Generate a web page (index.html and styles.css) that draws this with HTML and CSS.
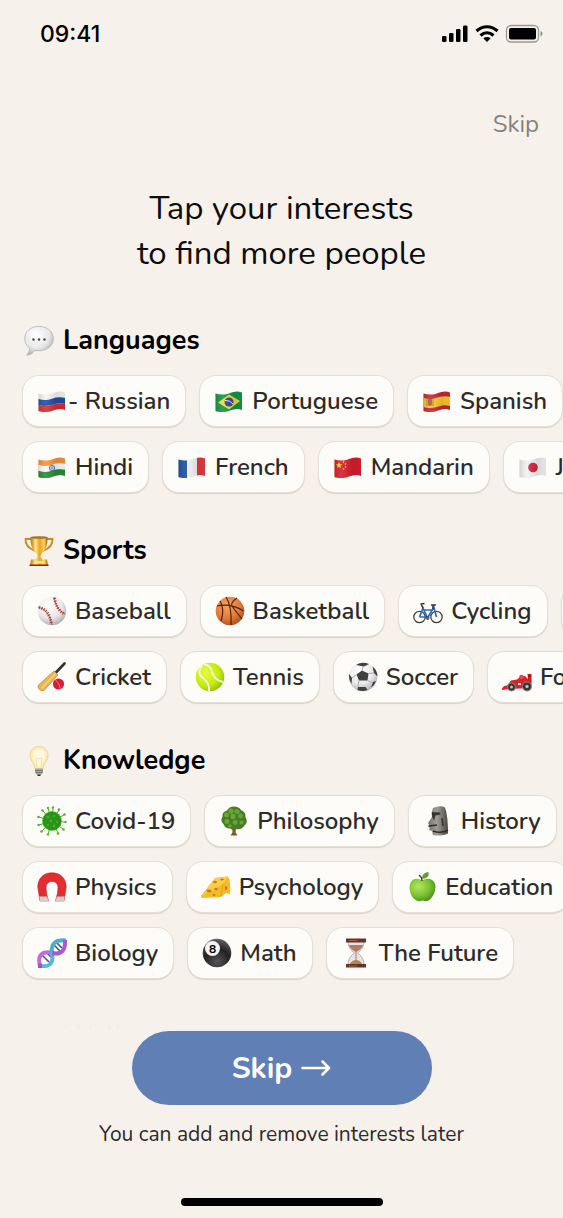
FILE: index.html
```
<!DOCTYPE html>
<html lang="en">
<head>
  <meta charset="UTF-8" />
  <meta name="viewport" content="width=device-width, initial-scale=1.0" />
  <title>Interests</title>
  <link rel="stylesheet" href="styles.css">
</head>
<body>
  <!-- shared flag shape, wave and gradients -->
  <svg class="defs" aria-hidden="true">
    <defs>
      <clipPath id="flag"><path d="M1.500 7.500C7 9.500 12 8.500 16 7S24 5 28 6.500V24C24 22.500 20 23 16 24.500S6 27 1.500 25Z"/></clipPath>
      <path id="wave" d="M0 7C7 9.500 12 8.500 16 7S24 5 30 7" fill="none"/>
      <linearGradient id="shade"><stop offset="0" stop-opacity=".18"/><stop offset=".3" stop-color="#fff" stop-opacity=".1"/><stop offset=".65" stop-opacity=".1"/><stop offset="1" stop-opacity=".05"/></linearGradient>
      <radialGradient id="white" cx=".4" cy=".3" r=".75"><stop offset="0" stop-color="#fff"/><stop offset=".6" stop-color="#e8e8e8"/><stop offset="1" stop-color="#a8a8a8"/></radialGradient>
      <radialGradient id="orange" cx=".4" cy=".3" r=".75"><stop offset="0" stop-color="#f7a35e"/><stop offset=".6" stop-color="#e27b39"/><stop offset="1" stop-color="#a94b1d"/></radialGradient>
      <radialGradient id="lime" cx=".35" cy=".35" r=".75"><stop offset="0" stop-color="#e6fb3c"/><stop offset=".6" stop-color="#c9ea12"/><stop offset="1" stop-color="#8eb80a"/></radialGradient>
      <radialGradient id="green" cx=".35" cy=".35" r=".8"><stop offset="0" stop-color="#b8e85a"/><stop offset=".55" stop-color="#77bf32"/><stop offset="1" stop-color="#3f7f16"/></radialGradient>
      <radialGradient id="black" cx=".5" cy=".8" r=".9"><stop offset="0" stop-color="#555"/><stop offset=".5" stop-color="#222"/><stop offset="1" stop-color="#777"/></radialGradient>
      <linearGradient id="gold"><stop offset="0" stop-color="#b8750f"/><stop offset=".3" stop-color="#ffe389"/><stop offset=".55" stop-color="#e7a325"/><stop offset=".8" stop-color="#ffd45c"/><stop offset="1" stop-color="#9c5c0a"/></linearGradient>
      <linearGradient id="stone"><stop offset="0" stop-color="#77736f"/><stop offset=".45" stop-color="#a09c98"/><stop offset="1" stop-color="#4a4643"/></linearGradient>
    </defs>
  </svg>

  <div class="status-bar">
    <span class="time">09:41</span>
    <svg class="status-icons" viewBox="0 0 102 20" aria-label="Signal, Wi-Fi, battery">
      <rect x="1" y="12" width="4.500" height="6" rx="1.300"/>
      <rect x="8" y="9" width="4.500" height="9" rx="1.300"/>
      <rect x="15" y="5" width="4.500" height="13" rx="1.300"/>
      <rect x="22" y="1.500" width="4.500" height="16.500" rx="1.300"/>
      <g fill="none" stroke="#000" stroke-width="3.200">
        <path d="M35.500 7C41.500 1.300 50.500 1.300 56.500 7"/>
        <path d="M39.500 11.500C43.500 8 48.500 8 52.500 11.500"/>
      </g>
      <path d="M42.300 14.300Q46 11.500 49.700 14.300L46 18Z"/>
      <rect x="65.500" y="1.500" width="32" height="16.500" rx="4.500" fill="none" stroke="#9c9994" stroke-width="1.300"/>
      <rect x="68" y="4" width="27" height="11.500" rx="2"/>
      <path d="M99.500 7V12.500Q101.500 11.500 101.500 9.700T99.500 7Z" fill="#8f8c88"/>
    </svg>
  </div>

  <div class="top-bar"><button class="skip-link">Skip</button></div>

  <h1>Tap your interests<br>to find more people</h1>

  <main class="interests">
    <section>
      <h2>
        <svg class="emoji" viewBox="0 0 30 30"><path d="M15 .5C6.500.5.700 5.600.700 12.500c0 4 1.800 7.300 4.800 9.300.2 3-1 5.500-3 7.500 3.500-.3 6.500-2 8.500-5 1.300.2 2.600.4 4 .4 8.500 0 14.300-5 14.300-12S23.500.5 15 .5Z" fill="url(#white)" stroke="#b5b5b5" stroke-width=".8"/><g fill="#444"><circle cx="9.500" cy="13.500" r="1.200"/><circle cx="15" cy="13.500" r="1.200"/><circle cx="20.500" cy="13.500" r="1.200"/></g></svg>
        Languages
      </h2>
      <div class="row">
        <button class="chip tight"><svg class="emoji" viewBox="0 0 30 30"><g clip-path="url(#flag)"><path d="M0 0H30V30H0Z" fill="#f4f4f4"/><use href="#wave" y="8.500" stroke="#1d50a8" stroke-width="6"/><use href="#wave" y="15" stroke="#d62e32" stroke-width="7"/><path d="M0 0H30V30H0Z" fill="url(#shade)"/></g></svg>- Russian</button>
        <button class="chip"><svg class="emoji" viewBox="0 0 30 30"><g clip-path="url(#flag)"><path d="M0 0H30V30H0Z" fill="#159447"/><path d="M15 8.500 26 15 15 23.500 4 16.500Z" fill="#f6d73c"/><circle cx="15" cy="16" r="4.500" fill="#2a4c94"/><path d="M11 14.500Q16 14 19 18" fill="none" stroke="#e9f0f0"/><path d="M0 0H30V30H0Z" fill="url(#shade)"/></g></svg>Portuguese</button>
        <button class="chip"><svg class="emoji" viewBox="0 0 30 30"><g clip-path="url(#flag)"><path d="M0 0H30V30H0Z" fill="#c62732"/><use href="#wave" y="9" stroke="#fac82d" stroke-width="9"/><path d="M6 13h4v6q-2 2-4 0Z" fill="#b45c35"/><path d="M5 13v7M11 13v7" stroke="#a77b46"/><path d="M0 0H30V30H0Z" fill="url(#shade)"/></g></svg>Spanish</button>
      </div>
      <div class="row">
        <button class="chip"><svg class="emoji" viewBox="0 0 30 30"><g clip-path="url(#flag)"><path d="M0 0H30V30H0Z" fill="#f4953f"/><use href="#wave" y="8.500" stroke="#fafafa" stroke-width="6"/><use href="#wave" y="15" stroke="#278c3b" stroke-width="7"/><circle cx="15" cy="16" r="2.600" fill="#dce3f5" stroke="#3655a5" stroke-width=".9"/><circle cx="15" cy="16" r=".8" fill="#3655a5"/><path d="M0 0H30V30H0Z" fill="url(#shade)"/></g></svg>Hindi</button>
        <button class="chip"><svg class="emoji" viewBox="0 0 30 30"><g clip-path="url(#flag)"><path d="M0 0H30V30H0Z" fill="#f4f4f4"/><path d="M0 0H10V30H0Z" fill="#1c4f9f"/><path d="M20 0H30V30H20Z" fill="#e13b42"/><path d="M0 0H30V30H0Z" fill="url(#shade)"/></g></svg>French</button>
        <button class="chip"><svg class="emoji" viewBox="0 0 30 30"><g clip-path="url(#flag)"><path d="M0 0H30V30H0Z" fill="#d71e2b"/><path d="m6 10 .9 2.200 2.300.1-1.800 1.400.6 2.300-2-1.300-2 1.300.6-2.300-1.800-1.400 2.300-.1Z" fill="#ffe03d"/><g fill="#ffe03d"><circle cx="10.500" cy="10" r=".8"/><circle cx="12.500" cy="12" r=".8"/><circle cx="12.500" cy="15" r=".8"/><circle cx="10.500" cy="17" r=".8"/></g><path d="M0 0H30V30H0Z" fill="url(#shade)"/></g></svg>Mandarin</button>
        <button class="chip"><svg class="emoji" viewBox="0 0 30 30"><g clip-path="url(#flag)"><path d="M0 0H30V30H0Z" fill="#f2f2f2"/><circle cx="15" cy="15.500" r="4.800" fill="#d4253d"/><path d="M0 0H30V30H0Z" fill="url(#shade)"/></g></svg>Japanese</button>
      </div>
    </section>

    <section>
      <h2>
        <svg class="emoji" viewBox="0 0 30 30"><path d="M7 3H1.500Q1 11 11 15M23 3h5.500Q29 11 19 15" fill="none" stroke="#c98a20" stroke-width="1.800"/><path d="M6.500 1h17Q24 12 18 17q-1.500 1.500-1.500 4l2.500 3H11l2.500-3q0-2.500-1.500-4Q6 12 6.500 1Z" fill="url(#gold)"/><ellipse cx="15" cy="1.500" rx="8.500" ry="1.300" fill="#a8701c"/><path d="M7 23.500H23L24 29.500H6Z" fill="url(#gold)"/><path d="M5.500 28.500h19v1.500h-19Z" fill="#7c2f0a"/><path d="M10 25h10v2.500H10Z" fill="#ffe486"/></svg>
        Sports
      </h2>
      <div class="row">
        <button class="chip"><svg class="emoji" viewBox="0 0 30 30"><circle cx="15" cy="15" r="14.300" fill="url(#white)"/><g fill="none" stroke="#a73b35"><path d="M1 11Q12 13 15 29M17 1q2 13 11 17" stroke-width=".8"/><path d="M2 11.500Q12 13.500 14.500 28M17.500 2q2 12 10 16" stroke-width="3" stroke-dasharray="1 1.500"/></g></svg>Baseball</button>
        <button class="chip"><svg class="emoji" viewBox="0 0 30 30"><circle cx="15" cy="15" r="14.300" fill="url(#orange)"/><g fill="none" stroke="#4b2415" stroke-width="1.200"><path d="M2 10Q16 7 28.500 15M11 1Q17 10 16 29M5 5q5 8 1 20M22 2q-7 5-5 8t10 13"/></g></svg>Basketball</button>
        <button class="chip"><svg class="emoji" viewBox="0 0 30 30"><g fill="none"><g stroke="#454545" stroke-width="1.300"><circle cx="6.500" cy="21" r="5.700"/><circle cx="23.500" cy="21" r="5.700"/></g><path d="m6.500 21 3.500-9 4.500 10L21 11M11 14h9M6.500 21h8M20.500 10l3 11" stroke="#2f67bd" stroke-width="1.700"/><path d="m7.500 8 4-.5M8 8l2 4M18 9h5M20 9v4" stroke="#333" stroke-width="1.500"/><circle cx="14.500" cy="22" r="1.500" stroke="#444"/></g></svg>Cycling</button>
        <button class="chip"><svg class="emoji" viewBox="0 0 30 30"><path d="M11 2v26" stroke="#777" stroke-width="1.500"/><path d="m12 3 12 5-12 5Z" fill="#d9292b"/></svg>Golf</button>
      </div>
      <div class="row">
        <button class="chip"><svg class="emoji" viewBox="0 0 30 30"><path d="m18 11.500 9.500-10" stroke="#333" stroke-width="2.600" stroke-linecap="round"/><path d="m17 9 4 4L7.500 28Q5 30 2.500 27.500T1.500 23Z" fill="#e9b653" stroke="#c48c32" stroke-width=".8"/><path d="m18.500 11.500-14 15" stroke="#f7d17e" stroke-width="1.500"/><circle cx="21.500" cy="22" r="5.600" fill="#d81f35"/><path d="M18.500 18q4 3 5 9" fill="none" stroke="#f08a92" stroke-width=".8"/></svg>Cricket</button>
        <button class="chip"><svg class="emoji" viewBox="0 0 30 30"><circle cx="15" cy="15" r="14.300" fill="url(#lime)"/><path d="M7 3.500Q1 11 8 16T14 29M8.500 2.500Q15 2 17 10T28 20" fill="none" stroke="#f6fbd9" stroke-width="1.800"/></svg>Tennis</button>
        <button class="chip"><svg class="emoji" viewBox="0 0 30 30"><circle cx="15" cy="15" r="14.300" fill="url(#white)"/><g fill="#404040"><path d="m14 8.500 6.500 3-1 7H11L8.500 12.500Z"/><path d="M8 3q6-4 13-1l-5 2.500ZM24.500 4.500q5 4 5 10L26 11ZM1 12 4 16l-.5 6Q.5 18 1 12ZM10 25h7.500l2 3q-5 2-10 0ZM25 20l3-1q-1.500 4-5 6.500Z"/></g><path d="m14 8.500 1-4M20.500 11.500 26 11M19.500 18.500 25 21M11 18.500 10 25M8.500 12.500 4 16" stroke="#999" stroke-width=".8"/></svg>Soccer</button>
        <button class="chip"><svg class="emoji" viewBox="0 0 30 30"><path d="M0 26.500 2 24l3-.5 4-5 6-1 3-2.500 5-1 3 3 1 9-18 1-9 1Z" fill="#e02028"/><path d="M25.500 12h4v12h-3Z" fill="#cf1b23"/><path d="M26 14h3" stroke="#7b1016"/><g fill="#333" stroke="#888"><circle cx="9.500" cy="25" r="4"/><circle cx="25" cy="24.500" r="4.500"/></g><circle cx="9.500" cy="25" r="1.500" fill="#bbb"/><circle cx="25" cy="24.500" r="1.700" fill="#bbb"/><circle cx="19.500" cy="15" r="2.300" fill="#f04045"/><path d="M16 22h3" stroke="#fff" stroke-width="2"/></svg>Formula 1</button>
      </div>
    </section>

    <section>
      <h2>
        <svg class="emoji" viewBox="0 0 30 30"><path d="M15 .5c-5.200 0-9 3.800-9 9 0 5 4.500 7.500 5 13h8c.5-5.500 5-8 5-13 0-5.200-3.800-9-9-9Z" fill="#fdebb8" stroke="#eed59a"/><path d="M15 3c-4 0-6 3-6 6.500 0 4 3 7 4 11h4c1-4 4-7 4-11C21 6 19 3 15 3Z" fill="#fff8e0"/><path d="m13 21-1-9q3 2 6 0l-1 9" fill="none" stroke="#f2dca0" stroke-width=".8"/><path d="M11 22.500h8v4L17 29h-4l-2-2.500Z" fill="#aaa"/><path d="M11 24.500h8M11.500 26.500h7" stroke="#777"/><path d="M13.500 28.500h3V30h-3Z" fill="#333"/></svg>
        Knowledge
      </h2>
      <div class="row">
        <button class="chip"><svg class="emoji" viewBox="0 0 30 30"><path d="M15 15 16 2M15 15 22 4M15 15 27 9M15 15l13 1M15 15l11 8M15 15l6 12M15 15l-4 13M15 15 5 25M15 15 2 19M15 15 2 11M15 15 6 5M15 15 11 2" stroke="#54a82d" stroke-width="1"/><g fill="#54b52d"><circle cx="16" cy="1.500" r="1.200"/><circle cx="22" cy="3.500" r="1.300"/><circle cx="27.500" cy="8.500" r="1.300"/><circle cx="28.500" cy="16" r="1.200"/><circle cx="26.500" cy="23.500" r="1.300"/><circle cx="21" cy="27.500" r="1.300"/><circle cx="11" cy="28.500" r="1.200"/><circle cx="4.500" cy="25.500" r="1.300"/><circle cx="1.500" cy="19" r="1.200"/><circle cx="1.500" cy="11" r="1.300"/><circle cx="5.500" cy="4.500" r="1.300"/><circle cx="11" cy="2" r="1.200"/></g><circle cx="15" cy="15" r="9.500" fill="#299518" stroke="#51aa2c" stroke-dasharray="1 1"/><g fill="#4fb029"><circle cx="11" cy="11" r="1.200"/><circle cx="17" cy="10" r="1"/><circle cx="14" cy="15" r="1.200"/><circle cx="20" cy="16" r="1"/><circle cx="11" cy="19" r="1"/><circle cx="17" cy="20" r="1.200"/></g></svg>Covid-19</button>
        <button class="chip"><svg class="emoji" viewBox="0 0 30 30"><path d="M13 18h4l-.5 8.500 2 3h-7l2-3Z" fill="#805433"/><path d="M15 .5q5 0 7 3.500 5 2 4.500 7 3 5-1 8.500-3 4.500-7.500 3.500-4 2-7-.5-5 0-6.500-4.500-3.500-3-1-7.500Q3 6 8 4.500 10 .5 15 .5Z" fill="#477e25"/><g fill="#6ba335"><circle cx="12" cy="5" r="2.700"/><circle cx="18" cy="5.500" r="2.500"/><circle cx="7.500" cy="9" r="2.500"/><circle cx="14" cy="10.500" r="2.700"/><circle cx="21.500" cy="10" r="2.400"/><circle cx="8" cy="15.500" r="2.500"/><circle cx="16" cy="16.500" r="2.400"/><circle cx="22.500" cy="16.500" r="2"/><circle cx="11" cy="20" r="1.700"/></g></svg>Philosophy</button>
        <button class="chip"><svg class="emoji" viewBox="0 0 30 30"><path d="M10 2q7-3 12-.5 3 8 3 26-5 3-15 1.500L9 25l-3-1 1-2-2-1.500 1-2-1-1.500 4-6L8.500 7Z" fill="url(#stone)"/><path d="m9 6 8 .5.500 2-5 1-1.500 5-2-4Z" fill="#383532"/><path d="m6 20 8-1M10 25q8 3 15-1M19 12l1 8" fill="none" stroke="#302d2b" stroke-width="1.500"/></svg>History</button>
      </div>
      <div class="row">
        <button class="chip"><svg class="emoji" viewBox="0 0 30 30"><path d="M3 29 .8 15C.8 6 7 .8 15 .8S29.200 6 29.200 15L27 29h-8.500q2.500-8 2.500-13c0-4-2-6.500-6-6.500S9 12 9 16q0 5 2.500 13Z" fill="#e42d32" stroke="#b82025" stroke-width=".6"/><path d="m2.300 24.500.9 5h8.500l-1.600-5ZM19.900 24.500l-1.600 5h8.500l.9-5Z" fill="#cfcfcf"/></svg>Physics</button>
        <button class="chip"><svg class="emoji" viewBox="0 0 30 30"><path d="M0 24 14 6l13-1.500Q30 10 29 22l-4-1-5 4-19 1Z" fill="#f7b92c"/><path d="m14 6 13-1.500L22 12 1 24Z" fill="#ffcc48"/><path d="m22 12-2 12" stroke="#e09b20"/><g fill="#c08016"><ellipse cx="8" cy="19" rx="2.500" ry="1.400"/><ellipse cx="15" cy="17" rx="1.700" ry="1.200"/><ellipse cx="14" cy="10" rx="2" ry="1.200"/><ellipse cx="21" cy="7.500" rx="1.800" ry="1"/><ellipse cx="25" cy="16" rx="1.200" ry="2"/><ellipse cx="13" cy="23" rx="1.600" ry="1"/></g></svg>Psychology</button>
        <button class="chip"><svg class="emoji" viewBox="0 0 30 30"><path d="M15 8.500q4-2.500 8-1.500 5.500 2 5.500 8-.5 8-6 13-2.500 2-7 .5-4.500 1.500-7-.5-5.500-4-6-12 0-7 5-9 4-1 7.500 1.500Z" fill="url(#green)"/><path d="M15 9q0-4-3-6" fill="none" stroke="#594027" stroke-width="1.500"/><path d="M15 7q-.5-6 6.500-7 1.500 6-6.500 7Z" fill="#5da02a"/></svg>Education</button>
      </div>
      <div class="row">
        <button class="chip"><svg class="emoji" viewBox="0 0 30 30"><path d="m5 17 7 7M9 14l6 6M17 7l7 7M20 5l5 5" stroke="#34519f" stroke-width="1.500"/><g fill="none" stroke-width="4"><path d="M3 28Q-1 13 14 14.500" stroke="#c56ade"/><path d="M3 28Q18 30 15 15" stroke="#56b9d3"/><path d="M15 15Q13 1 29 2.500" stroke="#4aaed0"/><path d="M15 15Q29 18 28 2" stroke="#a85bd0"/></g><path d="M1 25.500h4V30H1Z" fill="#9c55c8"/></svg>Biology</button>
        <button class="chip"><svg class="emoji" viewBox="0 0 30 30"><circle cx="15" cy="15" r="14.300" fill="url(#black)"/><circle cx="10.500" cy="10.500" r="7.500" fill="#f4f4f4"/><text x="10.500" y="15" class="ball-number">8</text></svg>Math</button>
        <button class="chip"><svg class="emoji" viewBox="0 0 30 30"><path d="M7 3h16q0 8-6.500 12Q23 19 23 27H7q0-8 6.500-12Q7 11 7 3Z" fill="#e5e3e7" stroke="#aaa3a5" stroke-width=".8"/><path d="M8 7h14q-1 4-7 7-6-3-7-7Z" fill="#b87863"/><path d="M8 27q3-5 7-5t7 5Z" fill="#b88353"/><path d="M15 13v10" stroke="#b87863"/><path d="M5 .5h20v4H5ZM5 26h20v3.500H5Z" fill="#693325"/><path d="M8 2.500h8M8 28h8" stroke="#a85b41"/></svg>The Future</button>
      </div>
    </section>

    <section>
      <h2>
        <svg class="emoji" viewBox="0 0 30 30"><path d="M15 29Q14 12 22 4q5 10-5 17M14 27Q2 22 5 9q10 5 9 18M16 27q0-9 12-11-1 10-12 11" fill="#5c9e3a"/></svg>
        Wellness
      </h2>
    </section>
  </main>

  <footer>
    <button class="skip-button">Skip
      <svg viewBox="0 0 30 16" aria-hidden="true"><path d="M1.500 8H28M21.500 1.500 28 8l-6.500 6.500" fill="none" stroke="#fff" stroke-width="2.500" stroke-linecap="round" stroke-linejoin="round"/></svg>
    </button>
    <p>You can add and remove interests later</p>
    <div class="home-bar"></div>
  </footer>
</body>
</html>
```
FILE: styles.css
```
* {
  box-sizing: border-box;
}
body {
  margin: 0;
  height: 100vh;
  display: flex;
  flex-direction: column;
  overflow: hidden;
  background: #f6f1ea;
  color: #0c0c0c;
  font-family: 'Nunito', 'Noto Sans', sans-serif;
}
button {
  border: none;
  margin: 0;
  font-family: inherit;
  cursor: pointer;
}
.defs {
  position: absolute;
  width: 0;
  height: 0;
}

.status-bar {
  display: flex;
  justify-content: space-between;
  align-items: center;
  flex-shrink: 0;
  height: 68px;
  padding: 0 20px 0 40px;
}
.time {
  font-family: 'Inter', sans-serif;
  font-size: 23px;
  font-weight: 500;
  color: #000;
}
.status-icons {
  width: 102px;
  height: 20px;
}

.top-bar {
  display: flex;
  justify-content: flex-end;
  flex-shrink: 0;
  padding: 38px 24px 0;
}
.skip-link {
  padding: 0;
  background: none;
  color: #85817d;
  font-size: 24px;
  line-height: 36px;
}

h1 {
  flex-shrink: 0;
  margin: 44px 0 47px;
  text-align: center;
  font-size: 33px;
  line-height: 45px;
  font-weight: 400;
}

.interests {
  flex: 1;
  min-height: 0;
  overflow: hidden;
  padding-left: 22px;
}
section {
  margin-bottom: 40px;
}
h2 {
  display: flex;
  align-items: center;
  gap: 9px;
  margin: 0 0 16px;
  padding-left: 2px;
  color: #000;
  font-size: 27px;
  line-height: 36px;
  font-weight: 700;
}
.emoji {
  width: 30px;
  height: 30px;
  flex-shrink: 0;
}
.row {
  display: flex;
  gap: 13px;
  margin-bottom: 14px;
}
.chip {
  display: flex;
  align-items: center;
  flex-shrink: 0;
  gap: 8px;
  height: 52px;
  padding: 0 15px 0 14px;
  border: 1px solid #e6dfd5;
  border-radius: 17px;
  background: #fdfcf8;
  box-shadow: 0 1px 1px #d9d3ca;
  color: #2c2b2a;
  font-size: 24px;
  font-weight: 600;
  white-space: nowrap;
}
.chip.tight {
  gap: 1px;
}
.ball-number {
  font-size: 12px;
  font-weight: 700;
  text-anchor: middle;
}

footer {
  position: relative;
  display: flex;
  flex-direction: column;
  align-items: center;
  flex-shrink: 0;
  padding-bottom: 12px;
  background: #f6f1ea;
}
/* fades the list out above the button */
footer::before {
  content: "";
  position: absolute;
  left: 0;
  right: 0;
  bottom: 100%;
  height: 36px;
  background: linear-gradient(to bottom, rgba(246, 241, 234, 0), rgba(246, 241, 234, 0.95) 70%, #f6f1ea);
}
.skip-button {
  display: flex;
  align-items: center;
  justify-content: center;
  gap: 9px;
  width: 300px;
  height: 74px;
  border-radius: 37px;
  background: #6080b5;
  color: #fff;
  font-size: 30px;
  font-weight: 700;
}
.skip-button svg {
  width: 30px;
  height: 16px;
}
footer p {
  margin: 14px 0 48px;
  color: #2c2b2a;
  font-size: 21px;
  line-height: 31px;
}
.home-bar {
  width: 202px;
  height: 8px;
  border-radius: 4px;
  background: #000;
}
```
